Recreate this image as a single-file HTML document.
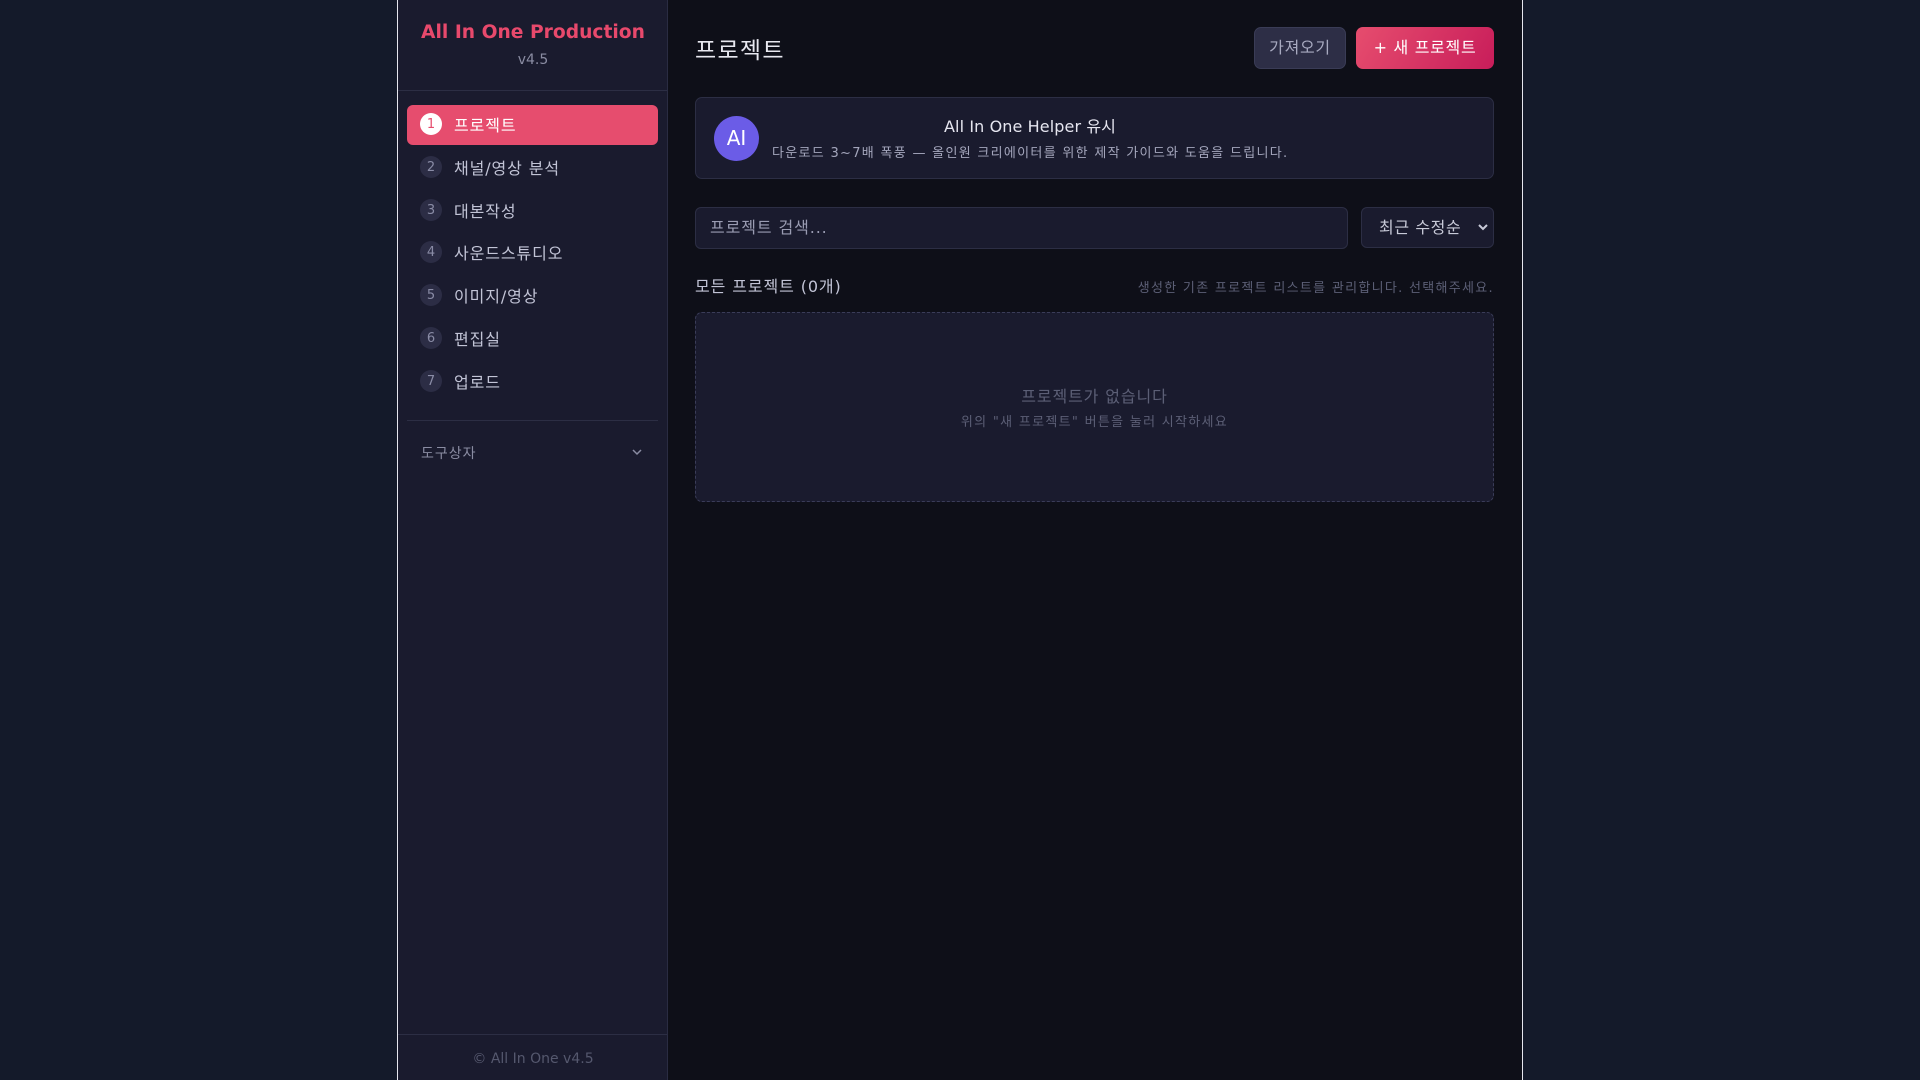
<!DOCTYPE html>
<html><head><meta charset="utf-8"><style>
*{box-sizing:border-box;margin:0;padding:0}
body{width:1920px;height:1080px;background:#141a2a;font-family:"DejaVu Sans","Noto Sans CJK KR",sans-serif;position:relative;overflow:hidden}
.abs{position:absolute}
#wrap{left:397px;top:0;width:1126px;height:1080px;border-left:1px solid #e6e6ee;border-right:1px solid #e6e6ee;background:#0e0f18}
#side{left:398px;top:0;width:270px;height:1080px;background:#1a1b2e;border-right:1px solid #2a2c42}
.t{white-space:nowrap}
.nav{left:407px;width:251px;height:40px;border-radius:6px}
.num{width:22px;height:22px;border-radius:50%;background:#2c2d45;color:#8a8ca6;font-size:13px;display:flex;align-items:center;justify-content:center;line-height:1;font-family:"DejaVu Sans",sans-serif}
.lbl{font-size:16px;color:#c2c4d6;letter-spacing:0.9px}
.s13{letter-spacing:1.3px}
</style></head><body>
<div id="wrap" class="abs"></div>
<div id="side" class="abs"></div>
<div class="abs t" style="left:398px;width:270px;top:22px;text-align:center;font-size:18.7px;font-weight:bold;color:#e8496c">All In One Production</div>
<div class="abs t" style="left:398px;width:270px;top:52px;text-align:center;font-size:14px;color:#8a8ca2">v4.5</div>
<div class="abs" style="left:398px;width:269px;top:90px;height:1px;background:#2c2e44"></div>
<div class="abs nav" style="top:105px;background:#e64d6e"></div>

<div class="abs num" style="left:420px;top:113px;background:#fff;color:#e64d6e">1</div>
<div class="abs t lbl" style="left:454px;top:112px;color:#fff">프로젝트</div>
<div class="abs num" style="left:420px;top:156px">2</div>
<div class="abs t lbl" style="left:454px;top:155px">채널/영상 분석</div>
<div class="abs num" style="left:420px;top:199px">3</div>
<div class="abs t lbl" style="left:454px;top:198px">대본작성</div>
<div class="abs num" style="left:420px;top:241px">4</div>
<div class="abs t lbl" style="left:454px;top:240px">사운드스튜디오</div>
<div class="abs num" style="left:420px;top:284px">5</div>
<div class="abs t lbl" style="left:454px;top:283px">이미지/영상</div>
<div class="abs num" style="left:420px;top:327px">6</div>
<div class="abs t lbl" style="left:454px;top:326px">편집실</div>
<div class="abs num" style="left:420px;top:370px">7</div>
<div class="abs t lbl" style="left:454px;top:369px">업로드</div>

<div class="abs" style="left:407px;width:251px;top:420px;height:1px;background:#2c2e44"></div>
<div class="abs t" style="left:421px;top:443px;font-size:14px;color:#8a8ca2;letter-spacing:1px">도구상자</div>
<svg class="abs" style="left:631px;top:447px" width="12" height="10" viewBox="0 0 12 10"><path d="M2 3l4 4 4-4" fill="none" stroke="#8a8ca2" stroke-width="1.5"/></svg>
<div class="abs" style="left:398px;width:269px;top:1034px;height:1px;background:#2c2e44"></div>
<div class="abs t" style="left:398px;width:270px;top:1051px;text-align:center;font-size:14px;color:#55586e">© All In One v4.5</div>

<div class="abs t" style="left:695px;top:31px;font-size:23px;color:#e8e8f0;letter-spacing:1.3px">프로젝트</div>
<div class="abs t" style="left:1254px;top:27px;width:92px;height:42px;border-radius:7px;background:#2d2e46;border:1px solid #3a3c56;color:#a8aac0;font-size:16px;text-align:center;line-height:40px;letter-spacing:0.7px">가져오기</div>
<div class="abs t" style="left:1356px;top:27px;width:138px;height:42px;border-radius:7px;background:linear-gradient(120deg,#e64d6e,#c81d5a);color:#fff;font-size:16px;text-align:center;line-height:42px;letter-spacing:0.7px">+ 새 프로젝트</div>

<div class="abs" style="left:695px;top:97px;width:799px;height:82px;border-radius:7px;background:#1a1b2e;border:1px solid #2c2e44"></div>
<div class="abs t" style="left:714px;top:116px;width:45px;height:45px;border-radius:50%;background:#6b5ce7;color:#fff;font-size:20px;text-align:center;line-height:45px">AI</div>
<div class="abs t" style="left:944px;top:113px;font-size:16px;color:#e6e6f0;letter-spacing:0.1px">All In One Helper 유시</div>
<div class="abs t s13" style="left:772px;top:142px;font-size:13px;color:#a4a6bc">다운로드 3~7배 폭풍 — 올인원 크리에이터를 위한 제작 가이드와 도움을 드립니다.</div>

<div class="abs t" style="left:695px;top:207px;width:653px;height:42px;border-radius:6px;background:#1a1b2e;border:1px solid #2c2e44;color:#9a9cb2;font-size:16px;line-height:40px;padding-left:14px;letter-spacing:0.9px">프로젝트 검색...</div>
<div class="abs t" style="left:1361px;top:207px;width:133px;height:41px;border-radius:6px;background:#1a1b2e;border:1px solid #2c2e44;color:#c8cad8;font-size:16px;line-height:39px;padding-left:17px;letter-spacing:0.6px">최근 수정순</div>
<svg class="abs" style="left:1478px;top:222px" width="10" height="10" viewBox="0 0 10 10"><path d="M1 3l4 4 4-4" fill="none" stroke="#c8cad8" stroke-width="2"/></svg>

<div class="abs t" style="left:695px;top:273px;font-size:16px;color:#c2c4d6;letter-spacing:0.9px">모든 프로젝트 (0개)</div>
<div class="abs t s13" style="right:426px;top:277px;font-size:13px;color:#5c5f76">생성한 기존 프로젝트 리스트를 관리합니다. 선택해주세요.</div>

<div class="abs" style="left:695px;top:312px;width:799px;height:190px;border-radius:7px;background:#1a1b2e;border:1px dashed #3a3c58"></div>
<div class="abs t" style="left:695px;width:799px;top:383px;text-align:center;font-size:16px;color:#5c5f76;letter-spacing:0.9px">프로젝트가 없습니다</div>
<div class="abs t s13" style="left:695px;width:799px;top:411px;text-align:center;font-size:13px;color:#5c5f76">위의 "새 프로젝트" 버튼을 눌러 시작하세요</div>
</body></html>
